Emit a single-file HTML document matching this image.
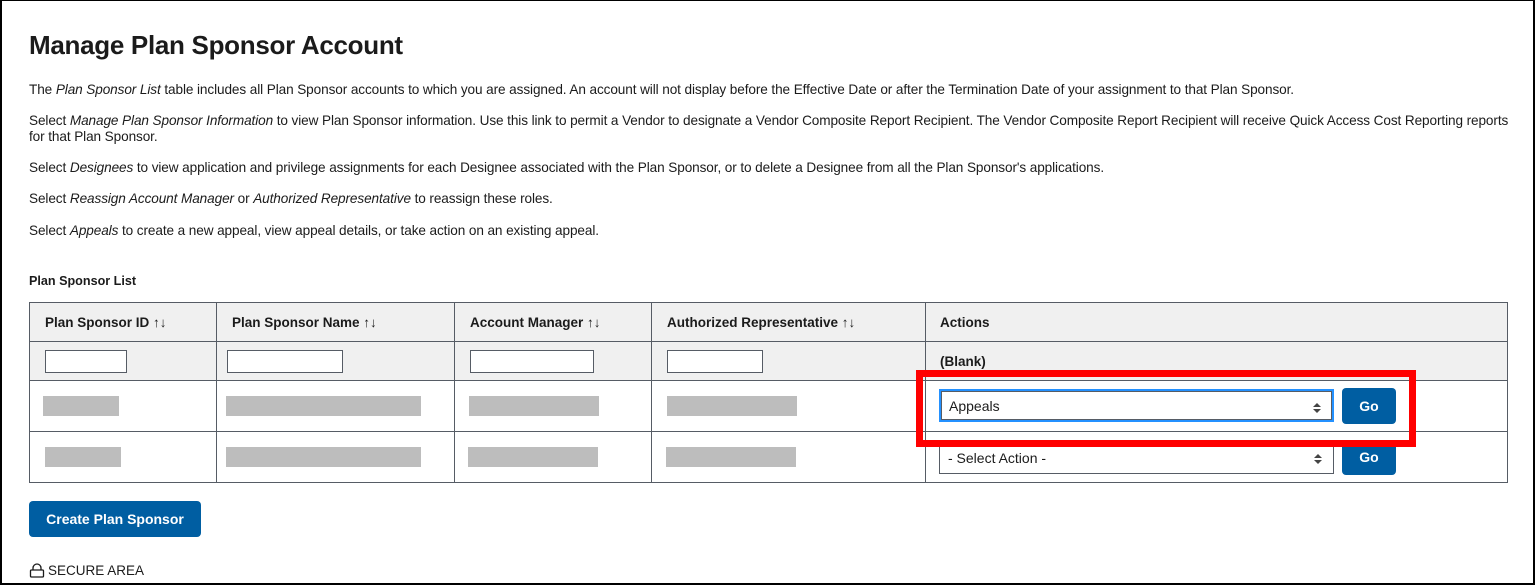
<!DOCTYPE html>
<html><head><style>
*{margin:0;padding:0;box-sizing:border-box}
body{width:1535px;height:585px;background:#fff;font-family:"Liberation Sans",Arial,sans-serif;color:#1b1b1b;position:relative;overflow:hidden}
.frame{position:absolute;left:0;top:0;width:1535px;height:585px;border:2px solid #000;border-top-width:1px}
.a{position:absolute;white-space:nowrap}
p.a{font-size:13.6px;letter-spacing:-0.1px}
h1{position:absolute;left:29px;top:30px;font-size:26px;font-weight:bold;letter-spacing:-0.3px}
table{position:absolute;left:29px;top:302px;border-collapse:collapse;font-size:13.5px}
td,th{border:1px solid #565c65;padding:0 0 0 15px;text-align:left}
th{background:#f0f0f0;height:39px;font-weight:bold}
tr.f td{background:#f0f0f0;height:39px}
tr.r td{height:51px}
input{width:82px;height:23px;border:1px solid #565c65;background:#fff;display:block}
.g{background:#bdbdbd;height:20px}
.sel{position:absolute;border:1px solid #565c65;background:#fff;font-size:14px;padding-left:8px;line-height:32px;height:33px;width:395px}
.sel:after{content:"";position:absolute;right:11px;top:12px;border:4px solid transparent;border-top:0;border-bottom:4px solid #444}
.sel:before{content:"";position:absolute;right:11px;top:18px;border:4px solid transparent;border-bottom:0;border-top:4px solid #444}
.btn{position:absolute;background:#005ea2;color:#fff;font-weight:bold;border-radius:4px;text-align:center}
</style></head><body>
<div class="frame"></div>
<h1>Manage Plan Sponsor Account</h1>
<p class="a" style="left:29px;top:82px">The <i>Plan Sponsor List</i> table includes all Plan Sponsor accounts to which you are assigned. An account will not display before the Effective Date or after the Termination Date of your assignment to that Plan Sponsor.</p>
<p class="a" style="left:29px;top:113px">Select <i>Manage Plan Sponsor Information</i> to view Plan Sponsor information. Use this link to permit a Vendor to designate a Vendor Composite Report Recipient. The Vendor Composite Report Recipient will receive Quick Access Cost Reporting reports</p>
<p class="a" style="left:29px;top:129px">for that Plan Sponsor.</p>
<p class="a" style="left:29px;top:160px">Select <i>Designees</i> to view application and privilege assignments for each Designee associated with the Plan Sponsor, or to delete a Designee from all the Plan Sponsor's applications.</p>
<p class="a" style="left:29px;top:191px">Select <i>Reassign Account Manager</i> or <i>Authorized Representative</i> to reassign these roles.</p>
<p class="a" style="left:29px;top:223px">Select <i>Appeals</i> to create a new appeal, view appeal details, or take action on an existing appeal.</p>
<div class="a" style="left:29px;top:274px;font-size:12.6px;font-weight:bold">Plan Sponsor List</div>
<table>
<tr><th style="width:187px">Plan Sponsor ID ↑↓</th><th style="width:238px">Plan Sponsor Name ↑↓</th><th style="width:197px">Account Manager ↑↓</th><th style="width:274px">Authorized Representative ↑↓</th><th style="width:582px;padding-left:14px">Actions</th></tr>
<tr class="f"><td><input></td><td style="padding-left:10px"><input style="width:116px"></td><td><input style="width:124px"></td><td><input style="width:96px"></td><td style="font-weight:bold;padding-left:14px">(Blank)</td></tr>
<tr class="r"><td style="padding-left:13px"><div class="g" style="width:76px"></div></td><td style="padding-left:9px"><div class="g" style="width:195px"></div></td><td style="padding-left:14px"><div class="g" style="width:130px"></div></td><td><div class="g" style="width:130px"></div></td><td></td></tr>
<tr class="r"><td><div class="g" style="width:76px"></div></td><td style="padding-left:9px"><div class="g" style="width:195px"></div></td><td style="padding-left:13px"><div class="g" style="width:130px"></div></td><td style="padding-left:14px"><div class="g" style="width:130px"></div></td><td></td></tr>
</table>
<div class="sel" style="left:939px;top:389px;border:2px solid #2491ff;outline:1px solid #565c65;outline-offset:-3px;line-height:30px">Appeals</div>
<div class="btn" style="left:1342px;top:388px;width:54px;height:36px;line-height:36px;font-size:14px">Go</div>
<div class="sel" style="left:939px;top:441px">- Select Action -</div>
<div class="btn" style="left:1342px;top:440px;width:54px;height:35px;line-height:35px;font-size:14px">Go</div>
<div class="a" style="left:916px;top:370px;width:500px;height:77px;border:7px solid #f00"></div>
<div class="btn" style="left:29px;top:501px;width:172px;height:36px;line-height:36px;font-size:14px">Create Plan Sponsor</div>
<div class="a" style="left:29px;top:563px;font-size:13.5px;display:flex;align-items:center">
<svg width="16" height="15" viewBox="0 0 16 15" style="margin-right:3px"><path d="M4 7V5a4 4 0 0 1 8 0v2" fill="none" stroke="#1b1b1b" stroke-width="1.3"/><rect x="1.5" y="7" width="13" height="7" rx="1" fill="none" stroke="#1b1b1b" stroke-width="1.3"/></svg>SECURE AREA</div>
</body></html>
